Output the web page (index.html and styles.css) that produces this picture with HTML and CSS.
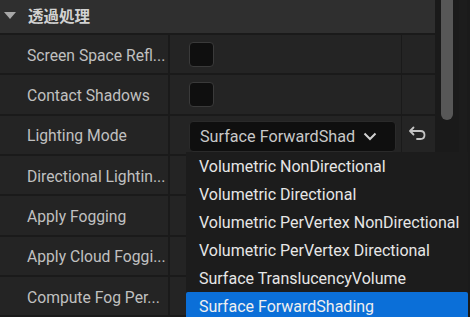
FILE: index.html
```html
<!DOCTYPE html>
<html>
<head>
<meta charset="utf-8">
<link rel="stylesheet" href="styles.css">
</head>
<body>
<div class="app">
  <div class="panel">
    <div class="header"><span class="tri"></span><span class="title">透過処理</span></div>
    <div class="row">
      <div class="name">Screen Space Refl...</div>
      <div class="value"><span class="check"></span></div>
      <div class="reset"></div>
    </div>
    <div class="row">
      <div class="name">Contact Shadows</div>
      <div class="value"><span class="check"></span></div>
      <div class="reset"></div>
    </div>
    <div class="row">
      <div class="name">Lighting Mode</div>
      <div class="value">
        <div class="combo"><span>Surface ForwardShad</span>
          <svg class="chev" width="14" height="9" viewBox="0 0 14 9"><path d="M1.5 1.5 L7 7 L12.5 1.5" fill="none" stroke="#d0d0d0" stroke-width="2"/></svg>
        </div>
      </div>
      <div class="reset">
        <svg class="undo" width="20" height="16" viewBox="0 0 20 16"><path d="M5.5 1.5 L2 5 L5.5 8.5 M2.5 5 H12.5 Q16.5 5 16.5 9 Q16.5 13 12.5 13 H9" fill="none" stroke="#c4c4c4" stroke-width="1.8" stroke-linecap="round" stroke-linejoin="round"/></svg>
      </div>
    </div>
    <div class="row">
      <div class="name">Directional Lightin...</div>
      <div class="value"></div>
      <div class="reset"></div>
    </div>
    <div class="row">
      <div class="name">Apply Fogging</div>
      <div class="value"></div>
      <div class="reset"></div>
    </div>
    <div class="row">
      <div class="name">Apply Cloud Foggi...</div>
      <div class="value"></div>
      <div class="reset"></div>
    </div>
    <div class="row">
      <div class="name">Compute Fog Per...</div>
      <div class="value"></div>
      <div class="reset"></div>
    </div>
  </div>
  <div class="gutter"><div class="thumb"></div></div>
  <div class="edge"><div class="edge-inner"></div></div>
  <div class="menu">
    <div class="item">Volumetric NonDirectional</div>
    <div class="item">Volumetric Directional</div>
    <div class="item">Volumetric PerVertex NonDirectional</div>
    <div class="item">Volumetric PerVertex Directional</div>
    <div class="item">Surface TranslucencyVolume</div>
    <div class="item selected">Surface ForwardShading</div>
  </div>
</div>
</body>
</html>
```
FILE: styles.css
```css
* { box-sizing: border-box; }
html, body { margin: 0; padding: 0; }
body {
  background: #1a1a1a;
  font-family: Roboto, "Noto Sans CJK JP", sans-serif;
  width: 470px;
  height: 317px;
  overflow: hidden;
}
.app {
  position: relative;
  display: flex;
  height: 317px;
}
.panel {
  width: 435px;
  display: flex;
  flex-direction: column;
  gap: 2px;
}
.header {
  height: 33px;
  background: #2f2f2f;
  display: flex;
  align-items: center;
  padding-bottom: 4px;
  flex-shrink: 0;
}
.tri {
  width: 0;
  height: 0;
  margin-left: 4px;
  margin-right: 12px;
  margin-top: 2px;
  border-left: 6px solid transparent;
  border-right: 6px solid transparent;
  border-top: 7px solid #a8a8a8;
}
.title {
  font-family: "Noto Sans CJK JP", sans-serif;
  font-weight: 700;
  font-size: 15.5px;
  color: #d2d2d2;
}
.row {
  height: 38.35px;
  display: flex;
  flex-shrink: 0;
}
.name {
  width: 168px;
  background: #242424;
  padding-left: 27px;
  padding-top: 2px;
  display: flex;
  align-items: center;
  font-size: 15.7px;
  color: #c0c0c0;
  white-space: nowrap;
}
.value {
  width: 231px;
  margin-left: 2px;
  background: #242424;
  padding-left: 19px;
  display: flex;
  align-items: center;
}
.reset {
  flex: 1;
  margin-left: 1px;
  background: #242424;
  display: flex;
  align-items: center;
  justify-content: center;
}
.check {
  width: 25px;
  height: 25px;
  background: #0f0f0f;
  border: 1px solid #3a3a3a;
  border-radius: 4px;
}
.combo {
  align-self: flex-start;
  margin-top: 5px;
  width: 207px;
  height: 31px;
  background: #0f0f0f;
  border: 1px solid #2a2a2a;
  border-radius: 4px;
  padding-left: 10px;
  display: flex;
  align-items: center;
  gap: 8px;
  font-size: 16.2px;
  color: #c8c8c8;
  white-space: nowrap;
}
.chev { margin-top: 1px; }
.undo { margin-left: -2px; margin-top: -1px; }
.gutter {
  width: 18px;
  padding-left: 6px;
}
.thumb {
  width: 12px;
  height: 120px;
  background: #575757;
  border-radius: 0 0 6px 6px;
}
.edge {
  flex: 1;
  padding-left: 6px;
}
.edge-inner {
  width: 8px;
  height: 100%;
  background: #1c1c1c;
}
.menu {
  position: absolute;
  left: 186px;
  top: 152px;
  width: 282px;
  height: 165px;
  background: #1c1c1c;
}
.item {
  height: 28px;
  padding-left: 13px;
  padding-top: 1px;
  display: flex;
  align-items: center;
  font-size: 16px;
  color: #e6e6e6;
  white-space: nowrap;
}
.item.selected {
  background: #0b6fd8;
  color: #f0f0f0;
  border-radius: 2px 2px 0 0;
}
```
